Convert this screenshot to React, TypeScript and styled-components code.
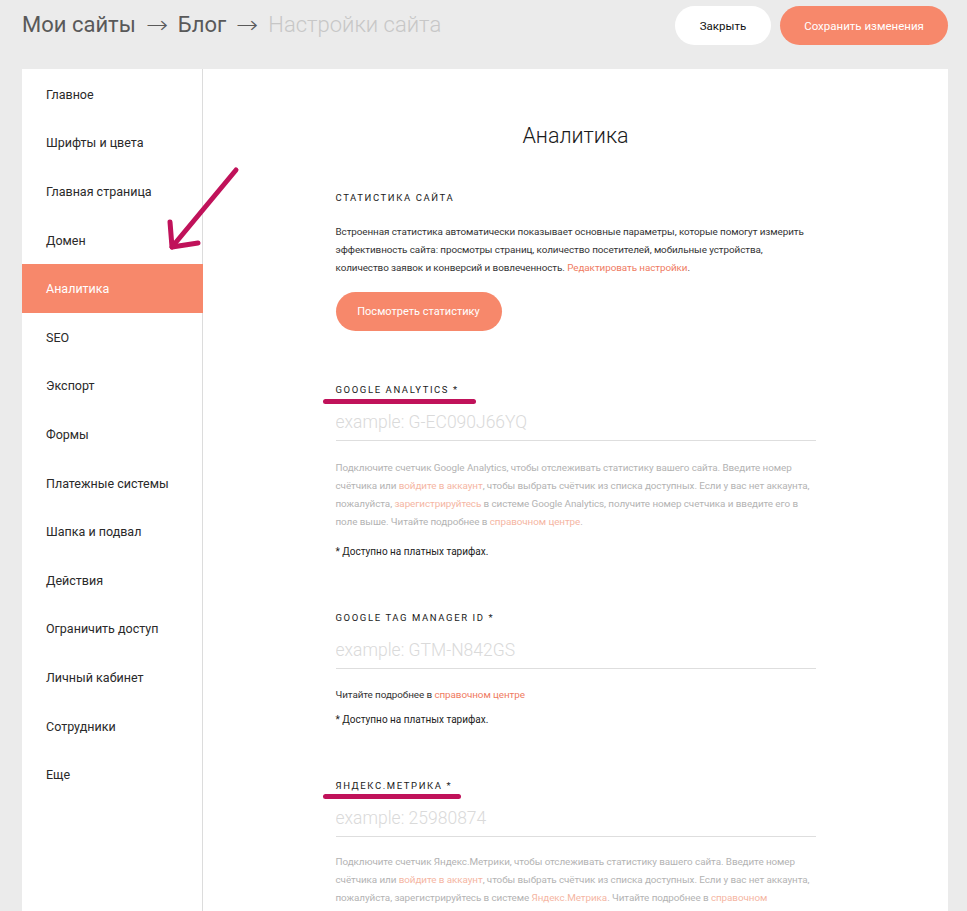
import React from "react";
import styled, { createGlobalStyle } from "styled-components";

const GlobalStyle = createGlobalStyle`
  html, body { margin: 0; padding: 0; background: #ebebeb; }
  body { font-family: Roboto, "Noto Sans", sans-serif; color: #222; }
  * { box-sizing: border-box; }
`;

const CORAL = "#f7886b";

const Page = styled.div`
  padding: 6px 19px 0 22px;
  height: 911px;
  overflow: hidden;
`;

const Header = styled.header`
  display: flex;
  align-items: center;
  justify-content: space-between;
  height: 39px;
  margin-bottom: 24px;
`;

const Crumbs = styled.div`
  display: flex;
  align-items: center;
  gap: 11px;
  font-size: 22px;
  line-height: 1;
  margin-top: -2px;
`;

const Crumb = styled.span<{ $muted?: boolean }>`
  color: ${(p) => (p.$muted ? "#c7c7c7" : "#595959")};
  font-weight: ${(p) => (p.$muted ? 300 : 400)};
`;

const CrumbArrow = styled.span`
  color: #5a5a5a;
  font-weight: 200;
  font-size: 24px;
  font-family: "DejaVu Sans", sans-serif;
  transform: scaleX(1.1);
`;

const Actions = styled.div`
  display: flex;
  gap: 9px;
`;

const PillButton = styled.button<{ $primary?: boolean; $w: number }>`
  height: 39px;
  width: ${(p) => p.$w}px;
  border: none;
  border-radius: 20px;
  background: ${(p) => (p.$primary ? CORAL : "#fff")};
  color: ${(p) => (p.$primary ? "#fff" : "#111")};
  font-family: Roboto, sans-serif;
  font-size: 11.5px;
  cursor: pointer;
`;

const Card = styled.div`
  position: relative;
  display: flex;
  background: #fff;
  min-height: 900px;
`;

const Sidebar = styled.nav`
  width: 181px;
  flex-shrink: 0;
  border-right: 1px solid #dcdcdc;
  padding-top: 1px;
  display: flex;
  flex-direction: column;
`;

const NavItem = styled.div<{ $active?: boolean }>`
  height: 48.6px;
  display: flex;
  align-items: center;
  padding-left: 24px;
  font-size: 12.5px;
  color: ${(p) => (p.$active ? "#fff" : "#2a2a2a")};
  background: ${(p) => (p.$active ? CORAL : "transparent")};
  margin-right: ${(p) => (p.$active ? "-1px" : "0")};
`;

const Main = styled.main`
  flex: 1;
  display: flex;
  justify-content: center;
  padding-top: 52px;
`;

const Column = styled.div`
  width: 480px;
  display: flex;
  flex-direction: column;
`;

const Title = styled.h1`
  margin: 0;
  text-align: center;
  font-size: 21.5px;
  line-height: 29px;
  font-weight: 300;
  color: #1a1a1a;
`;

const Section = styled.section<{ $top: number }>`
  display: flex;
  flex-direction: column;
  padding-top: ${(p) => p.$top}px;
`;

const LabelWrap = styled.div`
  position: relative;
`;

const Label = styled.div`
  font-size: 9.5px;
  line-height: 14px;
  letter-spacing: 1.6px;
  text-transform: uppercase;
  color: #1a1a1a;
`;

const Marker = styled.div<{ $w: number; $top: number }>`
  position: absolute;
  left: -13px;
  top: ${(p) => p.$top}px;
  width: ${(p) => p.$w}px;
  height: 5px;
  border-radius: 3px;
  background: #c0125a;
`;

const Text = styled.p<{ $faded?: boolean; $top: number }>`
  margin: ${(p) => p.$top}px 0 0;
  font-size: 9.9px;
  letter-spacing: -0.08px;
  line-height: 18px;
  white-space: nowrap;
  color: ${(p) => (p.$faded ? "#b3b3b3" : "#333")};
`;

const Link = styled.a<{ $faded?: boolean }>`
  color: ${(p) => (p.$faded ? "#f5b6a3" : "#ef7b62")};
  text-decoration: none;
`;

const StatButton = styled.button`
  margin-top: 15px;
  width: 166px;
  height: 39px;
  border: none;
  border-radius: 20px;
  background: ${CORAL};
  color: #fff;
  font-family: Roboto, sans-serif;
  font-size: 11px;
  align-self: flex-start;
`;

const Input = styled.input`
  margin-top: 8px;
  height: 36px;
  border: none;
  border-bottom: 1px solid #dedede;
  padding: 0 0 2px;
  font-family: Roboto, sans-serif;
  font-size: 17.5px;
  font-weight: 300;
  color: #333;
  outline: none;
  &::placeholder { color: #dadada; }
`;

const Note = styled.p<{ $top: number }>`
  margin: ${(p) => p.$top}px 0 0;
  font-size: 10px;
  line-height: 14px;
  color: #222;
`;

const Annotation = styled.svg`
  position: absolute;
  left: 140px;
  top: 95px;
  width: 100px;
  height: 90px;
  pointer-events: none;
`;

const navItems = [
  "Главное",
  "Шрифты и цвета",
  "Главная страница",
  "Домен",
  "Аналитика",
  "SEO",
  "Экспорт",
  "Формы",
  "Платежные системы",
  "Шапка и подвал",
  "Действия",
  "Ограничить доступ",
  "Личный кабинет",
  "Сотрудники",
  "Еще",
];

export default function App() {
  return (
    <>
      <GlobalStyle />
      <Page>
        <Header>
          <Crumbs>
            <Crumb>Мои сайты</Crumb>
            <CrumbArrow>→</CrumbArrow>
            <Crumb>Блог</Crumb>
            <CrumbArrow>→</CrumbArrow>
            <Crumb $muted>Настройки сайта</Crumb>
          </Crumbs>
          <Actions>
            <PillButton $w={96}>Закрыть</PillButton>
            <PillButton $primary $w={168}>Сохранить изменения</PillButton>
          </Actions>
        </Header>
        <Card>
          <Sidebar>
            {navItems.map((n) => (
              <NavItem key={n} $active={n === "Аналитика"}>
                {n}
              </NavItem>
            ))}
          </Sidebar>
          <Main>
            <Column>
              <Title>Аналитика</Title>
              <Section $top={41}>
                <Label>Статистика сайта</Label>
                <Text $top={18}>
                  Встроенная статистика автоматически показывает основные параметры, которые помогут измерить
                  <br />
                  эффективность сайта: просмотры страниц, количество посетителей, мобильные устройства,
                  <br />
                  количество заявок и конверсий и вовлеченность. <Link>Редактировать настройки</Link>.
                </Text>
                <StatButton>Посмотреть статистику</StatButton>
              </Section>
              <Section $top={52}>
                <LabelWrap>
                  <Label>Google Analytics *</Label>
                  <Marker $w={153} $top={16} />
                </LabelWrap>
                <Input placeholder="example: G-EC090J66YQ" />
                <Text $faded $top={18}>
                  Подключите счетчик Google Analytics, чтобы отслеживать статистику вашего сайта. Введите номер
                  <br />
                  счётчика или <Link $faded>войдите в аккаунт</Link>, чтобы выбрать счётчик из списка доступных. Если у вас нет аккаунта,
                  <br />
                  пожалуйста, <Link $faded>зарегистрируйтесь</Link> в системе Google Analytics, получите номер счетчика и введите его в
                  <br />
                  поле выше. Читайте подробнее в <Link $faded>справочном центре</Link>.
                </Text>
                <Note $top={14}>* Доступно на платных тарифах.</Note>
              </Section>
              <Section $top={52}>
                <Label>Google Tag Manager ID *</Label>
                <Input placeholder="example: GTM-N842GS" />
                <Text $top={17}>
                  Читайте подробнее в <Link>справочном центре</Link>
                </Text>
                <Note $top={9}>* Доступно на платных тарифах.</Note>
              </Section>
              <Section $top={52}>
                <LabelWrap>
                  <Label>Яндекс.Метрика *</Label>
                  <Marker $w={138} $top={15} />
                </LabelWrap>
                <Input placeholder="example: 25980874" />
                <Text $faded $top={16}>
                  Подключите счетчик Яндекс.Метрики, чтобы отслеживать статистику вашего сайта. Введите номер
                  <br />
                  счётчика или <Link $faded>войдите в аккаунт</Link>, чтобы выбрать счётчик из списка доступных. Если у вас нет аккаунта,
                  <br />
                  пожалуйста, зарегистрируйтесь в системе <Link $faded>Яндекс.Метрика</Link>. Читайте подробнее в <Link $faded>справочном</Link>
                </Text>
              </Section>
            </Column>
          </Main>
          <Annotation viewBox="0 0 100 90">
            <g fill="none" stroke="#c0125a" strokeWidth="5" strokeLinecap="round" strokeLinejoin="round">
              <path d="M74 6 L10 83" />
              <path d="M8 58 L10 83 L36 79" />
            </g>
          </Annotation>
        </Card>
      </Page>
    </>
  );
}
